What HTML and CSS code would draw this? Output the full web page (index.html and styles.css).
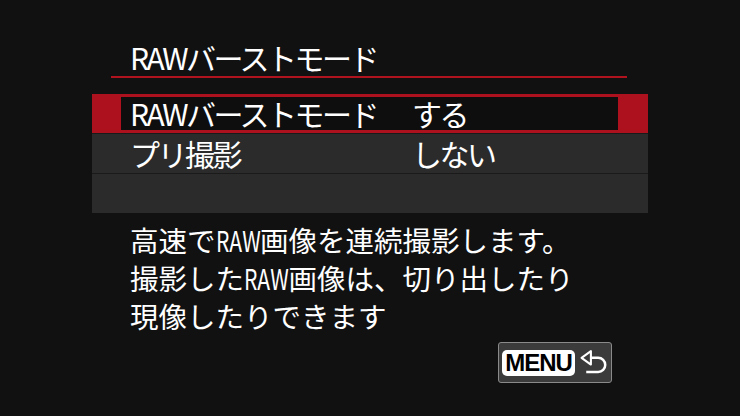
FILE: index.html
```html
<!DOCTYPE html>
<html lang="ja">
<head>
<meta charset="utf-8">
<title>RAWバーストモード</title>
<link rel="stylesheet" href="styles.css">
</head>
<body>
<div class="screen">
  <div class="title-bar">
    <span class="title">RAWバーストモード</span>
  </div>

  <div class="menu">
    <div class="row row-active">
      <div class="row-inner">
        <span class="label">RAWバーストモード</span>
        <span class="value">する</span>
      </div>
    </div>
    <div class="row">
      <div class="row-inner">
        <span class="label">プリ撮影</span>
        <span class="value">しない</span>
      </div>
    </div>
    <div class="row"></div>
  </div>

  <div class="desc">
    <p>高速で<span class="latin">RAW</span>画像を連続撮影します。</p>
    <p>撮影した<span class="latin">RAW</span>画像は、切り出したり</p>
    <p>現像したりできます</p>
  </div>

  <div class="footer">
    <div class="menu-btn">
      <span class="menu-key">MENU</span>
      <svg class="back-icon" viewBox="0 0 26 26" width="27" height="27">
        <polygon points="1.5,8.5 10.5,2 10.5,15" fill="none" stroke="#fff" stroke-width="2" stroke-linejoin="round"/>
        <path d="M10.5 8.5 H17.5 A6.8 6.8 0 0 1 17.5 22.1 H6" fill="none" stroke="#fff" stroke-width="2.4"/>
      </svg>
    </div>
  </div>
</div>
</body>
</html>
```

FILE: styles.css
```css
html, body {
  margin: 0;
  padding: 0;
  background: #111111;
}

.screen {
  width: 740px;
  height: 416px;
  background: #111111;
  color: #ffffff;
  font-family: "Noto Sans CJK JP", "Noto Sans", sans-serif;
  display: flex;
  flex-direction: column;
  overflow: hidden;
}

/* condensed Latin run inside the help text */
.latin {
  display: inline-block;
  transform: scaleX(0.74);
  transform-origin: 0 0;
  margin-right: -0.56em;
}

/* heading with red rule */
.title-bar {
  margin-left: 111px;
  width: 516px;
  height: 38px;
  margin-top: 38px;
  border-bottom: 2px solid #b0131d;
  display: flex;
  align-items: center;
}

.title {
  padding-left: 19px;
  font-size: 30px;
  letter-spacing: -2.5px;
  line-height: 38px;
  white-space: nowrap;
}

/* settings list */
.menu {
  margin-top: 16px;
  margin-left: 92px;
  width: 556px;
  display: flex;
  flex-direction: column;
  gap: 1px;
  background: #1a1a1a;
}

.row {
  height: 39px;
  background: #2b2b2b;
  display: flex;
  box-sizing: border-box;
}

.row-active {
  background: #ad111d;
  padding: 3px 30px 3px 29px;
}

.row-inner {
  flex: 1;
  display: flex;
  align-items: center;
  padding-left: 38px;
  font-size: 30px;
  letter-spacing: -2.5px;
  line-height: 33px;
  white-space: nowrap;
}

.row-active .row-inner {
  background: #0e0e0e;
  padding-left: 9px;
}

.label {
  width: 282px;
}

/* help text */
.desc {
  margin-top: 8px;
  padding-left: 130px;
  font-size: 28.5px;
  line-height: 38px;
}

.desc p {
  margin: 0;
  white-space: nowrap;
}

/* MENU / back button */
.footer {
  margin-top: 7px;
  padding-left: 498px;
  display: flex;
}

.menu-btn {
  width: 114px;
  height: 41px;
  box-sizing: border-box;
  border: 1px solid #8a8a8a;
  border-radius: 3px;
  background: #3b3b3b;
  display: flex;
  align-items: center;
  padding-left: 3px;
  gap: 5px;
}

.menu-key {
  width: 73px;
  height: 26px;
  box-sizing: border-box;
  background: #ffffff;
  border-radius: 5px;
  color: #000000;
  font-family: "Liberation Sans", Arial, sans-serif;
  font-weight: bold;
  font-size: 24px;
  letter-spacing: -1px;
  line-height: 26px;
  text-align: center;
}

.back-icon {
  display: block;
}
```
